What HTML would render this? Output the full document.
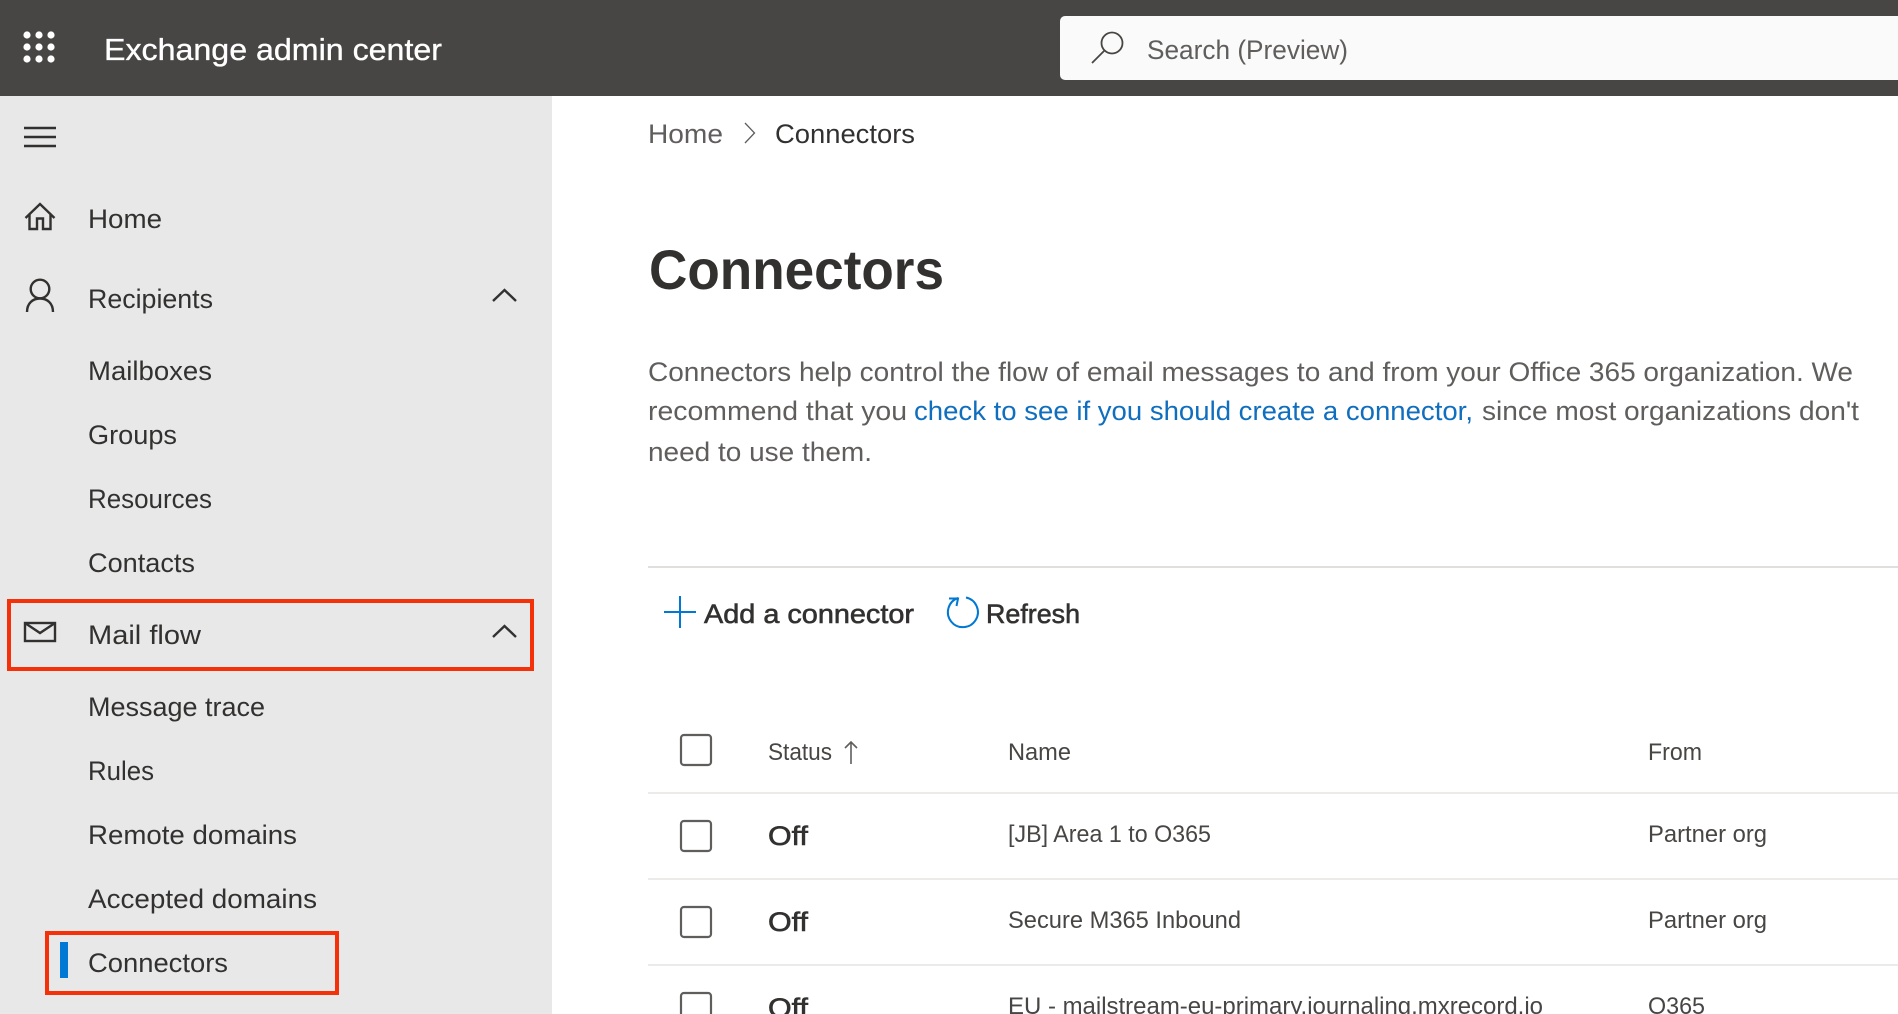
<!DOCTYPE html>
<html lang="en"><head><meta charset="utf-8"><title>Exchange admin center</title>
<style>
html,body{margin:0;padding:0;width:1898px;height:1014px;overflow:hidden;background:#fff}
svg{display:block}
text{font-family:"Liberation Sans",sans-serif}
.n{font-size:27px;fill:#323130}
.p{font-size:27px;fill:#605e5c}
.c{font-size:24px;fill:#484644}
.s{font-size:27px;fill:#323130;stroke:#323130;stroke-width:.6}
.i{fill:none;stroke:#323130;stroke-width:2.4}
.b{fill:none;stroke:#605e5c;stroke-width:2.2}
</style></head><body>
<svg width="1898" height="1014" viewBox="0 0 1898 1014" xmlns="http://www.w3.org/2000/svg">
<rect x="0" y="0" width="1898" height="1014" fill="#fff"/>
<rect x="0" y="96" width="552" height="918" fill="#e8e8e8"/>
<rect x="0" y="0" width="1898" height="96" fill="#484644"/>
<g fill="#fff"><circle cx="27" cy="35" r="3.6"/><circle cx="39" cy="35" r="3.6"/><circle cx="51" cy="35" r="3.6"/><circle cx="27" cy="47" r="3.6"/><circle cx="39" cy="47" r="3.6"/><circle cx="51" cy="47" r="3.6"/><circle cx="27" cy="59" r="3.6"/><circle cx="39" cy="59" r="3.6"/><circle cx="51" cy="59" r="3.6"/></g>
<text x="104" y="60" font-size="31" fill="#fff" stroke="#fff" stroke-width=".35" textLength="338" lengthAdjust="spacingAndGlyphs">Exchange admin center</text>
<path d="M1065 16H1898V80H1065a5 5 0 0 1-5-5V21a5 5 0 0 1 5-5z" fill="#fafafa"/>
<circle cx="1112" cy="43" r="10.5" fill="none" stroke="#484644" stroke-width="1.800"/>
<path d="M1104.500 50.500L1092 63" fill="none" stroke="#484644" stroke-width="1.800"/>
<text x="1147" y="59" font-size="27" fill="#605e5c" textLength="201" lengthAdjust="spacingAndGlyphs">Search (Preview)</text>

<path d="M24 128H56M24 137H56M24 146H56" class="i"/>
<path d="M25.500 218L40 204L54.500 218M29.500 214V229H37V218.500H43V229H50.500V214" class="i"/>
<circle cx="40" cy="289" r="9.3" class="i"/>
<path d="M27 312C27 303 33 298.500 40 298.500C47 298.500 53 303 53 312" class="i"/>
<path d="M493 301L504.500 290L516 301" class="i"/>
<rect x="25" y="623" width="30" height="18" class="i"/>
<path d="M25 623L40 633L55 623" class="i"/>
<path d="M493 637L504.500 626L516 637" class="i"/>

<text x="88" y="228" class="n" textLength="74" lengthAdjust="spacingAndGlyphs">Home</text>
<text x="88" y="308" class="n" textLength="125" lengthAdjust="spacingAndGlyphs">Recipients</text>
<text x="88" y="380" class="n" textLength="124" lengthAdjust="spacingAndGlyphs">Mailboxes</text>
<text x="88" y="444" class="n" textLength="89" lengthAdjust="spacingAndGlyphs">Groups</text>
<text x="88" y="508" class="n" textLength="124" lengthAdjust="spacingAndGlyphs">Resources</text>
<text x="88" y="572" class="n" textLength="107" lengthAdjust="spacingAndGlyphs">Contacts</text>
<text x="88" y="644" class="n" textLength="113" lengthAdjust="spacingAndGlyphs">Mail flow</text>
<text x="88" y="716" class="n" textLength="177" lengthAdjust="spacingAndGlyphs">Message trace</text>
<text x="88" y="780" class="n" textLength="66" lengthAdjust="spacingAndGlyphs">Rules</text>
<text x="88" y="844" class="n" textLength="209" lengthAdjust="spacingAndGlyphs">Remote domains</text>
<text x="88" y="908" class="n" textLength="229" lengthAdjust="spacingAndGlyphs">Accepted domains</text>
<text x="88" y="972" class="n" textLength="140" lengthAdjust="spacingAndGlyphs">Connectors</text>
<rect x="60" y="942" width="8" height="36" fill="#0078d4"/>
<rect x="9" y="601" width="523" height="68" fill="none" stroke="#f5310a" stroke-width="4"/>
<rect x="47" y="933" width="290" height="60" fill="none" stroke="#f5310a" stroke-width="4"/>

<text x="648" y="143" class="p" textLength="75" lengthAdjust="spacingAndGlyphs">Home</text>
<path d="M745 123L754.500 133L745 143" fill="none" stroke="#605e5c" stroke-width="1.300"/>
<text x="775" y="143" class="n" textLength="140" lengthAdjust="spacingAndGlyphs">Connectors</text>
<text x="649" y="289" font-size="56" font-weight="700" fill="#323130" textLength="295" lengthAdjust="spacingAndGlyphs">Connectors</text>
<text x="648" y="381" class="p" textLength="1205" lengthAdjust="spacingAndGlyphs">Connectors help control the flow of email messages to and from your Office 365 organization. We</text>
<text x="648" y="420" class="p" textLength="259" lengthAdjust="spacingAndGlyphs">recommend that you</text>
<text x="914" y="420" font-size="27" fill="#106ebe" textLength="559" lengthAdjust="spacingAndGlyphs">check to see if you should create a connector,</text>
<text x="1482" y="420" class="p" textLength="377" lengthAdjust="spacingAndGlyphs">since most organizations don't</text>
<text x="648" y="461" class="p" textLength="224" lengthAdjust="spacingAndGlyphs">need to use them.</text>
<rect x="648" y="566" width="1250" height="2" fill="#e1dfdd"/>

<path d="M664 612H696M680 596V628" fill="none" stroke="#0078d4" stroke-width="2"/>
<text x="704" y="623" class="s" textLength="210" lengthAdjust="spacingAndGlyphs">Add a connector</text>
<path d="M966 597.500A15 15 0 1 1 958 598" fill="none" stroke="#0078d4" stroke-width="2"/>
<path d="M949 598.500H958L956.500 606" fill="none" stroke="#0078d4" stroke-width="2"/>
<text x="986" y="623" class="s" textLength="94" lengthAdjust="spacingAndGlyphs">Refresh</text>

<rect x="681" y="735" width="30" height="30" rx="3" class="b"/>
<text x="768" y="760" class="c" fill="#605e5c" textLength="64" lengthAdjust="spacingAndGlyphs">Status</text>
<path d="M851 764V742M845 748L851 742L857 748" fill="none" stroke="#605e5c" stroke-width="1.600"/>
<text x="1008" y="760" class="c" textLength="63" lengthAdjust="spacingAndGlyphs">Name</text>
<text x="1648" y="760" class="c" textLength="54" lengthAdjust="spacingAndGlyphs">From</text>
<rect x="648" y="792" width="1250" height="2" fill="#edebe9"/>

<rect x="681" y="821" width="30" height="30" rx="3" class="b"/>
<text x="768" y="845" class="s" textLength="40" lengthAdjust="spacingAndGlyphs">Off</text>
<text x="1008" y="842" class="c" textLength="203" lengthAdjust="spacingAndGlyphs">[JB] Area 1 to O365</text>
<text x="1648" y="842" class="c" textLength="119" lengthAdjust="spacingAndGlyphs">Partner org</text>
<rect x="648" y="878" width="1250" height="2" fill="#edebe9"/>

<rect x="681" y="907" width="30" height="30" rx="3" class="b"/>
<text x="768" y="931" class="s" textLength="40" lengthAdjust="spacingAndGlyphs">Off</text>
<text x="1008" y="928" class="c" textLength="233" lengthAdjust="spacingAndGlyphs">Secure M365 Inbound</text>
<text x="1648" y="928" class="c" textLength="119" lengthAdjust="spacingAndGlyphs">Partner org</text>
<rect x="648" y="964" width="1250" height="2" fill="#edebe9"/>

<rect x="681" y="993" width="30" height="30" rx="3" class="b"/>
<text x="768" y="1017" class="s" textLength="40" lengthAdjust="spacingAndGlyphs">Off</text>
<text x="1008" y="1014" class="c" textLength="535" lengthAdjust="spacingAndGlyphs">EU - mailstream-eu-primary.journaling.mxrecord.io</text>
<text x="1648" y="1014" class="c" textLength="57" lengthAdjust="spacingAndGlyphs">O365</text>
</svg>
</body></html>
